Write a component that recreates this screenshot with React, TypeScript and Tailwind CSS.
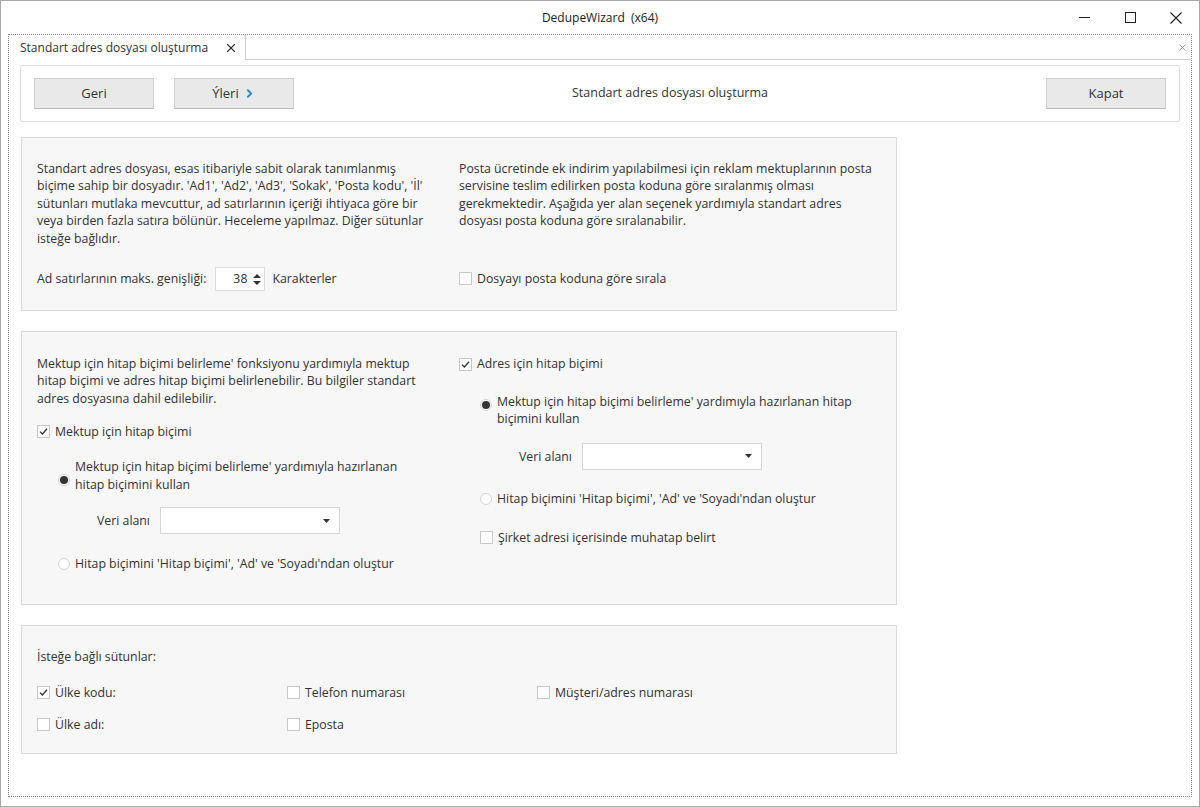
import { X, ChevronRight } from 'lucide-react'

function Check({ checked = false }: { checked?: boolean }) {
  return (
    <span className="inline-flex items-center justify-center w-[13px] h-[13px] border border-[#c8c8c8] bg-white shrink-0">
      {checked && (
        <svg width="9" height="9" viewBox="0 0 9 9">
          <path d="M1 4.6 L3.4 7 L8 1.8" fill="none" stroke="#333" strokeWidth="1.3" />
        </svg>
      )}
    </span>
  )
}

function Radio({ checked = false }: { checked?: boolean }) {
  return (
    <span className="inline-flex items-center justify-center w-[12px] h-[12px] rounded-full border border-[#d4d4d4] bg-white shrink-0">
      {checked && <span className="w-[8px] h-[8px] rounded-full bg-[#333]" />}
    </span>
  )
}

function Dropdown() {
  return (
    <div className="w-[180px] h-[27px] bg-white border border-[#d6d6d6] flex items-center justify-end pr-[9px]">
      <svg width="7" height="4" viewBox="0 0 7 4">
        <path d="M0 0 H7 L3.5 4 Z" fill="#333" />
      </svg>
    </div>
  )
}

function Button({ children }: { children: React.ReactNode }) {
  return (
    <button className="w-[120px] h-[31px] bg-[#e9e9e9] border border-[#cfcfcf] border-b-[#b9b9b9] text-[13px] text-[#333] flex items-center justify-center gap-1">
      {children}
    </button>
  )
}

function Lines({ lines }: { lines: string[] }) {
  return (
    <div className="whitespace-nowrap">
      {lines.map((l) => (
        <div key={l}>{l}</div>
      ))}
    </div>
  )
}

export default function App() {
  return (
    <div
      className="w-[1200px] h-[807px] bg-white border border-[#a9a9a9] text-[#333] text-[12.3px] flex flex-col overflow-hidden"
      style={{ fontFamily: '"Open Sans", "Noto Sans", sans-serif' }}
    >
      {/* title bar */}
      <div className="h-[33px] shrink-0 flex items-center relative">
        <div className="flex-1 text-center text-[12px] text-[#222]">DedupeWizard&nbsp;&nbsp;(x64)</div>
        <div className="absolute right-0 top-0 h-[33px] flex">
          <div className="w-[46px] h-[33px] flex items-center justify-center">
            <svg width="11" height="11" viewBox="0 0 11 11">
              <path d="M0 5.5 H11" stroke="#222" strokeWidth="1" />
            </svg>
          </div>
          <div className="w-[46px] h-[33px] flex items-center justify-center">
            <svg width="11" height="11" viewBox="0 0 11 11">
              <rect x="0.5" y="0.5" width="10" height="10" fill="none" stroke="#222" strokeWidth="1" />
            </svg>
          </div>
          <div className="w-[46px] h-[33px] flex items-center justify-center">
            <svg width="12" height="12" viewBox="0 0 12 12">
              <path d="M0.5 0.5 L11.5 11.5 M11.5 0.5 L0.5 11.5" stroke="#222" strokeWidth="1.1" />
            </svg>
          </div>
        </div>
      </div>

      {/* dotted document frame */}
      <div className="mx-[7px] h-[763px] border border-dotted border-[#8a8a8a] flex flex-col">
        {/* tab strip */}
        <div className="h-[25px] shrink-0 flex items-stretch">
          <div className="w-[237px] shrink-0 bg-white border-r border-[#cfcfcf] flex items-center pl-[11px] pr-[6px] justify-between">
            <span className="text-[12px] text-[#333] whitespace-nowrap">Standart adres dosyası oluşturma</span>
            <X size={14} strokeWidth={1.9} className="text-[#333] shrink-0 mr-[1px]" />
          </div>
          <div className="flex-1 border-b border-[#cfcfcf] flex items-center justify-end pr-[3px]">
            <X size={11} strokeWidth={2} className="text-[#9a9a9a]" />
          </div>
        </div>

        {/* toolbar */}
        <div className="mt-[5px] ml-[11px] mr-[11px] h-[57px] border border-[#e0e0e0] rounded-[2px] flex items-center px-[13px]">
          <Button>Geri</Button>
          <div className="w-[20px]" />
          <Button>
            <span>Ýleri</span>
            <ChevronRight size={13} strokeWidth={3.5} className="text-[#2a8ad4]" />
          </Button>
          <div className="flex-1 text-center text-[12.5px] text-[#333]">Standart adres dosyası oluşturma</div>
          <Button>Kapat</Button>
        </div>

        {/* box 1 */}
        <div className="mt-[15px] ml-[12px] w-[876px] h-[174px] bg-[#f7f7f7] border border-[#dadada] grid grid-cols-[422px_1fr] pl-[15px] pt-[22px] leading-[17.4px]">
          <div className="flex flex-col">
            <Lines
              lines={[
                'Standart adres dosyası, esas itibariyle sabit olarak tanımlanmış',
                "biçime sahip bir dosyadır. 'Ad1', 'Ad2', 'Ad3', 'Sokak', 'Posta kodu', 'İl'",
                'sütunları mutlaka mevcuttur, ad satırlarının içeriği ihtiyaca göre bir',
                'veya birden fazla satıra bölünür. Heceleme yapılmaz. Diğer sütunlar',
                'isteğe bağlıdır.',
              ]}
            />
            <div className="mt-[20px] flex items-center h-[24px]">
              <span>Ad satırlarının maks. genişliği:</span>
              <div className="ml-[9px] w-[50px] h-[24px] bg-white border border-[#dcdcdc] flex items-center justify-end pr-[3px] gap-[6px]">
                <span>38</span>
                <svg width="8" height="13" viewBox="0 0 8 13">
                  <path d="M0 5 L4 1 L8 5 Z M0 8 L4 12 L8 8 Z" fill="#333" />
                </svg>
              </div>
              <span className="ml-[7px]">Karakterler</span>
            </div>
          </div>
          <div className="flex flex-col">
            <Lines
              lines={[
                'Posta ücretinde ek indirim yapılabilmesi için reklam mektuplarının posta',
                'servisine teslim edilirken posta koduna göre sıralanmış olması',
                'gerekmektedir. Aşağıda yer alan seçenek yardımıyla standart adres',
                'dosyası posta koduna göre sıralanabilir.',
              ]}
            />
            <div className="mt-[37px] flex items-center h-[24px] gap-[5px]">
              <Check />
              <span>Dosyayı posta koduna göre sırala</span>
            </div>
          </div>
        </div>

        {/* box 2 */}
        <div className="mt-[20px] ml-[12px] w-[876px] h-[274px] bg-[#f7f7f7] border border-[#dadada] grid grid-cols-[422px_1fr] pl-[15px] pt-[23px] leading-[17.4px]">
          <div className="flex flex-col">
            <Lines
              lines={[
                "Mektup için hitap biçimi belirleme' fonksiyonu yardımıyla mektup",
                'hitap biçimi ve adres hitap biçimi belirlenebilir. Bu bilgiler standart',
                'adres dosyasına dahil edilebilir.',
              ]}
            />
            <div className="mt-[15px] flex items-center gap-[5px] h-[18px]">
              <Check checked />
              <span>Mektup için hitap biçimi</span>
            </div>
            <div className="mt-[18px] ml-[21px] flex gap-[5px]">
              <div className="mt-[13px]"><Radio checked /></div>
              <Lines lines={["Mektup için hitap biçimi belirleme' yardımıyla hazırlanan", 'hitap biçimini kullan']} />
            </div>
            <div className="mt-[14px] ml-[60px] flex items-center gap-[10px]">
              <span>Veri alanı</span>
              <Dropdown />
            </div>
            <div className="mt-[21px] ml-[21px] flex items-center gap-[5px] h-[18px]">
              <Radio />
              <span>Hitap biçimini 'Hitap biçimi', 'Ad' ve 'Soyadı'ndan oluştur</span>
            </div>
          </div>
          <div className="flex flex-col">
            <div className="flex items-center gap-[5px] h-[18px]">
              <Check checked />
              <span>Adres için hitap biçimi</span>
            </div>
            <div className="mt-[20px] ml-[21px] flex gap-[5px]">
              <div className="mt-[3px]"><Radio checked /></div>
              <Lines lines={["Mektup için hitap biçimi belirleme' yardımıyla hazırlanan hitap", 'biçimini kullan']} />
            </div>
            <div className="mt-[15px] ml-[60px] flex items-center gap-[10px]">
              <span>Veri alanı</span>
              <Dropdown />
            </div>
            <div className="mt-[20px] ml-[21px] flex items-center gap-[5px] h-[18px]">
              <Radio />
              <span>Hitap biçimini 'Hitap biçimi', 'Ad' ve 'Soyadı'ndan oluştur</span>
            </div>
            <div className="mt-[21px] ml-[21px] flex items-center gap-[5px] h-[18px]">
              <Check />
              <span>Şirket adresi içerisinde muhatap belirt</span>
            </div>
          </div>
        </div>

        {/* box 3 */}
        <div className="mt-[20px] ml-[12px] w-[876px] h-[129px] bg-[#f7f7f7] border border-[#dadada] pl-[15px] pt-[22px] leading-[17.4px]">
          <div>İsteğe bağlı sütunlar:</div>
          <div className="mt-[18px] grid grid-cols-[250px_250px_250px] gap-y-[14px]">
            <div className="flex items-center gap-[5px] h-[18px]"><Check checked /><span>Ülke kodu:</span></div>
            <div className="flex items-center gap-[5px] h-[18px]"><Check /><span>Telefon numarası</span></div>
            <div className="flex items-center gap-[5px] h-[18px]"><Check /><span>Müşteri/adres numarası</span></div>
            <div className="flex items-center gap-[5px] h-[18px]"><Check /><span>Ülke adı:</span></div>
            <div className="flex items-center gap-[5px] h-[18px]"><Check /><span>Eposta</span></div>
          </div>
        </div>
      </div>
    </div>
  )
}
